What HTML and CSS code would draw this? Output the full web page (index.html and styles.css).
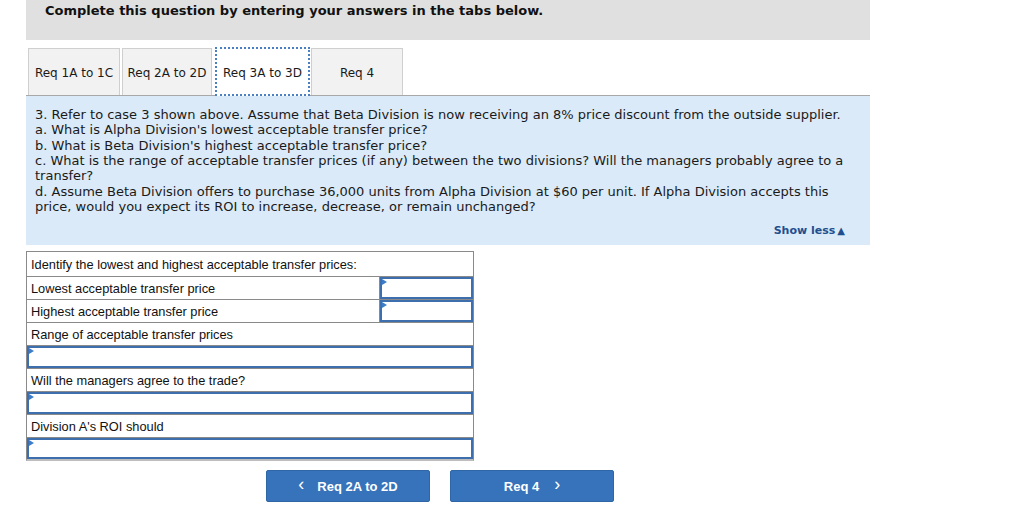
FILE: index.html
```html
<!DOCTYPE html>
<html>
<head>
<meta charset="utf-8">
<link rel="stylesheet" href="styles.css">
</head>
<body>
<div class="wrap">
  <div class="banner">Complete this question by entering your answers in the tabs below.</div>
  <div class="tabs">
    <div class="tab t1">Req 1A to 1C</div>
    <div class="tab t2">Req 2A to 2D</div>
    <div class="tab t3 active">Req 3A to 3D</div>
    <div class="tab t4">Req 4</div>
  </div>
  <div class="panel">
    <p class="q">3. Refer to case 3 shown above. Assume that Beta Division is now receiving an 8% price discount from the outside supplier.<br>
    a. What is Alpha Division's lowest acceptable transfer price?<br>
    b. What is Beta Division's highest acceptable transfer price?<br>
    c. What is the range of acceptable transfer prices (if any) between the two divisions? Will the managers probably agree to a transfer?<br>
    d. Assume Beta Division offers to purchase 36,000 units from Alpha Division at $60 per unit. If Alpha Division accepts this price, would you expect its ROI to increase, decrease, or remain unchanged?</p>
    <div class="showless">Show less<span class="tri">&#9650;</span></div>
  </div>
  <div class="grid">
    <div class="row head"><div class="lbl">Identify the lowest and highest acceptable transfer prices:</div></div>
    <div class="row split"><div class="lbl">Lowest acceptable transfer price</div><div class="inp small"></div></div>
    <div class="row split"><div class="lbl">Highest acceptable transfer price</div><div class="inp small"></div></div>
    <div class="row"><div class="lbl">Range of acceptable transfer prices</div></div>
    <div class="row"><div class="inp full"></div></div>
    <div class="row"><div class="lbl">Will the managers agree to the trade?</div></div>
    <div class="row"><div class="inp full"></div></div>
    <div class="row"><div class="lbl">Division A's ROI should</div></div>
    <div class="row last"><div class="inp full"></div></div>
  </div>
  <div class="nav">
    <button class="btn"><span class="chev">&lsaquo;</span>Req 2A to 2D</button>
    <button class="btn">Req 4<span class="chev right">&rsaquo;</span></button>
  </div>
</div>
</body>
</html>
```
FILE: styles.css
```css
html, body {
  margin: 0;
  padding: 0;
  background: #ffffff;
}
body {
  font-family: Verdana, "DejaVu Sans", sans-serif;
  color: #1a1a1a;
}
.wrap {
  margin-left: 26px;
  width: 844px;
}
.banner {
  height: 40px;
  box-sizing: border-box;
  background: #e0e0e0;
  padding: 3px 0 0 19px;
  font-size: 13px;
  font-weight: bold;
  color: #111;
}
.tabs {
  display: flex;
  align-items: flex-end;
  margin-top: 8px;
  padding-left: 2px;
  border-bottom: 1px solid #a8a8a8;
  height: 48px;
  box-sizing: border-box;
}
.tab {
  height: 47px;
  box-sizing: border-box;
  border: 1px solid #cfcfcf;
  border-bottom: none;
  background: #f2f2f2;
  font-size: 12px;
  display: flex;
  align-items: center;
  justify-content: center;
  padding-top: 2px;
  color: #1a1a1a;
}
.t1 { width: 92px; }
.t2 { width: 90px; margin-left: 2px; }
.t3 { width: 95px; margin-left: 3px; }
.t4 { width: 92px; margin-left: 1px; }
.tab.active {
  background: #ffffff;
  border: 2px dotted #4a7fc1;
  height: 49px;
  margin-bottom: -1px;
  position: relative;
}
.panel {
  background: #dbeaf8;
  height: 149px;
  box-sizing: border-box;
  padding: 11px 20px 0 9px;
  display: flex;
  flex-direction: column;
}
.q {
  margin: 0;
  font-size: 13px;
  line-height: 15.35px;
  color: #1a1a1a;
}
.showless {
  margin-top: auto;
  margin-bottom: 8px;
  align-self: flex-end;
  margin-right: 5px;
  font-size: 11px;
  font-weight: bold;
  color: #1f4f8f;
}
.tri {
  font-size: 10px;
  margin-left: 2px;
}
.grid {
  margin-top: 6px;
  width: 448px;
  box-sizing: border-box;
  border: 1px solid #8a8a8a;
  border-bottom: 2px solid #bdbdbd;
  font-family: Arial, "Liberation Sans", sans-serif;
  font-size: 12.8px;
  color: #111;
}
.row {
  height: 23px;
  display: flex;
  border-top: 1px solid #8a8a8a;
  box-sizing: border-box;
}
.row.head {
  border-top: none;
  height: 24px;
}
.row.last {
  height: 22px;
}
.lbl {
  flex: 1;
  padding-left: 4px;
  display: flex;
  align-items: center;
}
.split .lbl {
  border-right: 1px solid #8a8a8a;
}
.inp {
  position: relative;
  box-sizing: border-box;
  border: 2px solid #3d6fae;
  background: #ffffff;
}
.inp::before {
  content: "";
  position: absolute;
  left: 0;
  top: 0;
  border-left: 5px solid #3d7cc9;
  border-top: 3px solid transparent;
  border-bottom: 3px solid transparent;
}
.inp.small {
  width: 93px;
}
.inp.full {
  flex: 1;
}
.nav {
  display: flex;
  gap: 20px;
  margin-top: 9px;
  padding-left: 240px;
}
.btn {
  width: 164px;
  height: 32px;
  border: 1px solid #2f66a6;
  border-radius: 2px;
  background: #3673ba;
  color: #ffffff;
  font-family: Arial, "Liberation Sans", sans-serif;
  font-size: 13px;
  font-weight: bold;
  display: flex;
  align-items: center;
  justify-content: center;
  padding: 0;
}
.chev {
  font-size: 18px;
  font-weight: normal;
  margin-right: 13px;
  margin-top: -3px;
}
.chev.right {
  margin-right: 0;
  margin-left: 15px;
}
```
